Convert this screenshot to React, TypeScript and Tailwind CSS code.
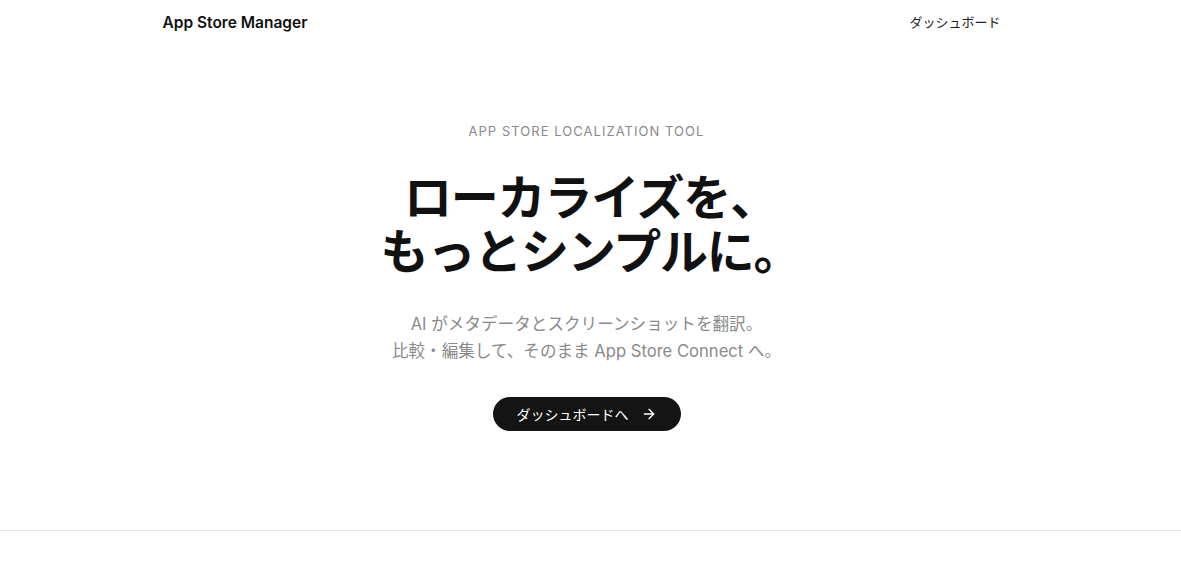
import React from 'react';
import { ArrowRight } from 'lucide-react';

const font = { fontFamily: 'Inter, "Noto Sans CJK JP", sans-serif' };

export default function App() {
    return (
        <div className="min-h-screen bg-white text-[#111111]" style={font}>
            {/* Header */}
            <header className="mx-auto flex h-[45px] max-w-4xl items-center justify-between px-5">
                <span className="text-[15.5px] font-semibold">App Store Manager</span>
                <a href="#" className="pr-[18px] text-[13px] text-[#222222]">
                    ダッシュボード
                </a>
            </header>

            {/* Hero */}
            <section className="flex flex-col items-center px-5 pt-[76px] pb-[99px] text-center">
                <p className="mr-2 text-[13px] leading-5 tracking-[0.08em] text-[#8a8a8a]">
                    APP STORE LOCALIZATION TOOL
                </p>
                <h1 className="mt-[30px] text-[48px] font-bold leading-[54px] tracking-tight">
                    ローカライズを、
                    <br />
                    もっとシンプルに。
                </h1>
                <p className="mt-[32px] mr-2 text-[16.6px] leading-[27px] text-[#8a8a8a]">
                    AI がメタデータとスクリーンショットを翻訳。
                    <br />
                    比較・編集して、そのまま App Store Connect へ。
                </p>
                <a
                    href="#"
                    className="mt-[32px] mr-2 flex h-[34px] items-center gap-3 rounded-full bg-[#141414] px-6 text-[14px] text-white"
                >
                    ダッシュボードへ
                    <ArrowRight className="h-4 w-4" strokeWidth={2} />
                </a>
            </section>

            {/* Footer */}
            <footer className="h-[60px] border-t border-[#e5e5e5]" />
        </div>
    );
}
